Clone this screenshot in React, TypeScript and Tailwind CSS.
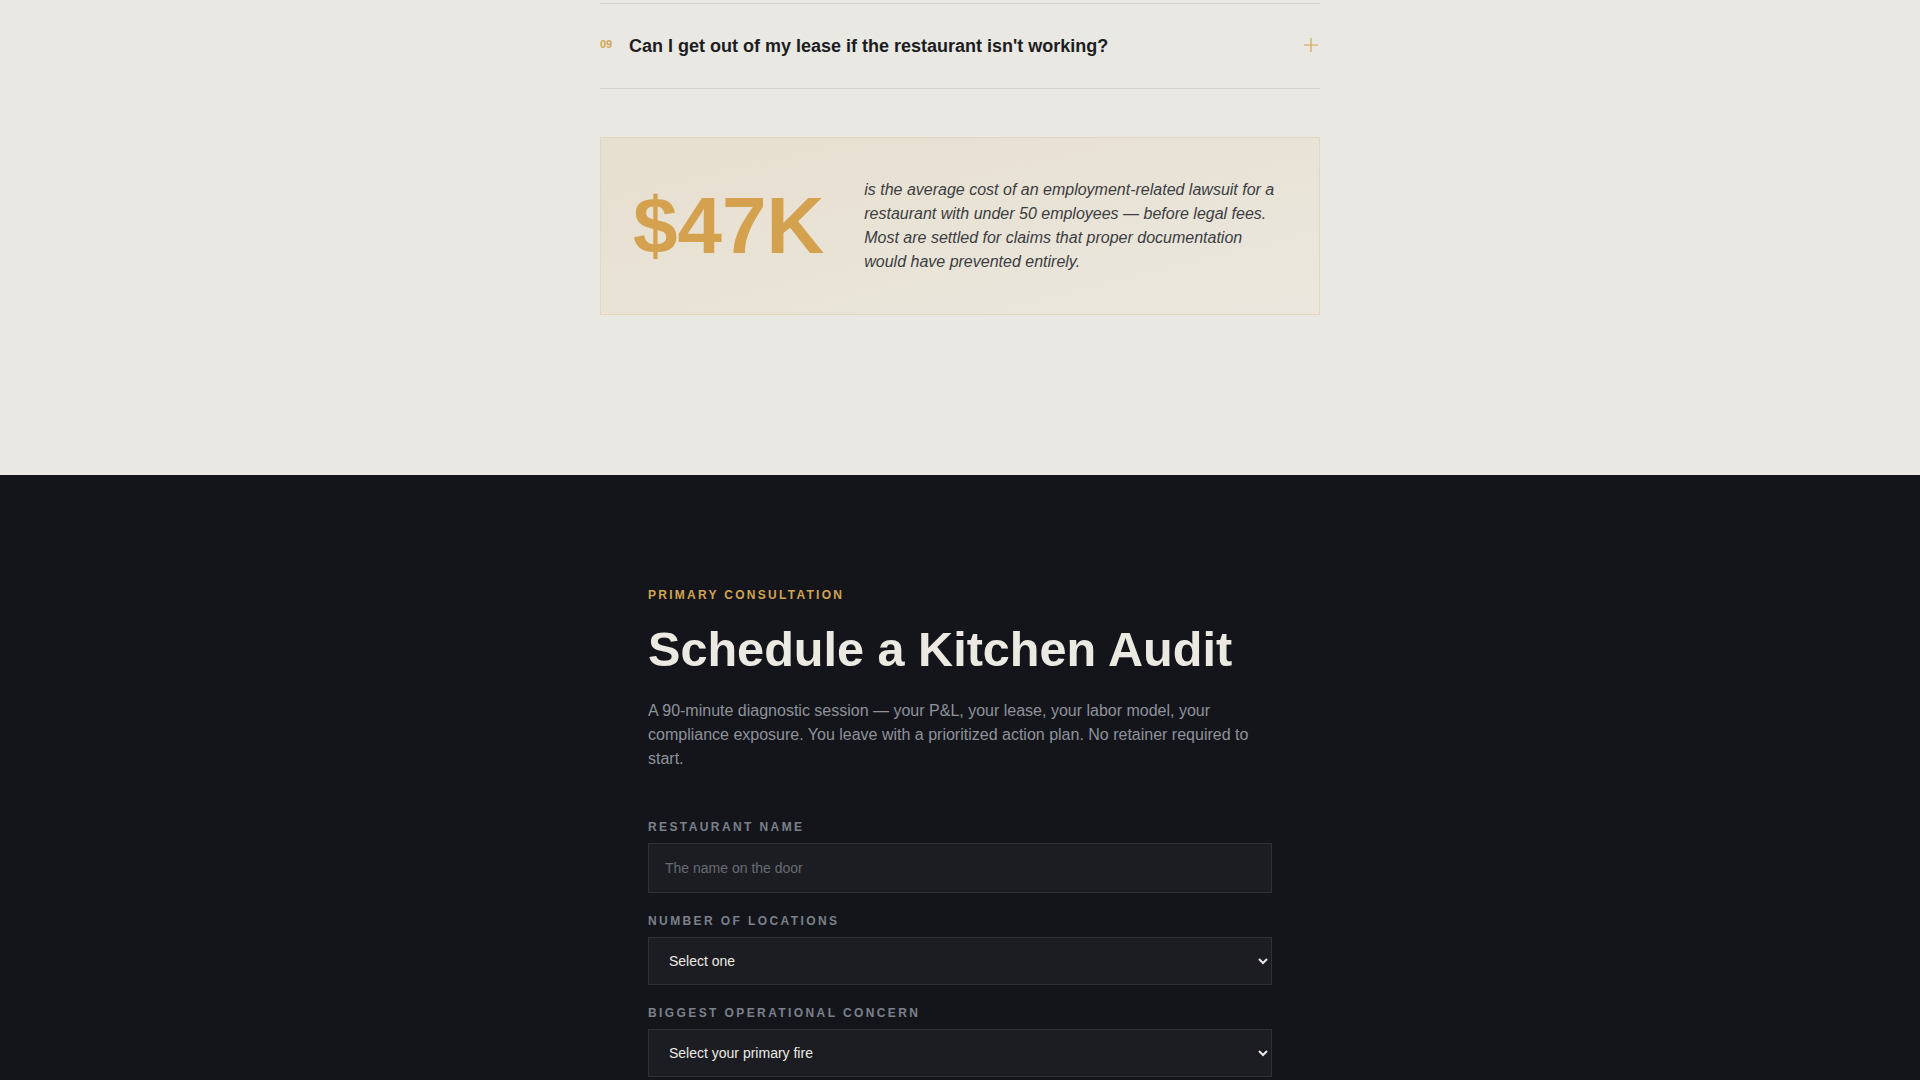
import React from "react";

const sans = { fontFamily: '"Liberation Sans", Arial, sans-serif' };

function FaqRow({ num, question }: { num: string; question: string }) {
  return (
    <div className="border-t border-b border-[#d6d3cb] py-[30px] flex items-start">
      <span className="w-[29px] shrink-0 mt-[2px] text-[11px] leading-4 font-bold text-[#d4a452]">{num}</span>
      <h3 className="flex-1 text-[18px] leading-6 font-bold text-[#1c1d22]">{question}</h3>
      <svg width="16" height="16" viewBox="0 0 16 16" className="mt-[3px] mr-[1px] shrink-0" fill="none">
        <path d="M8 1v14M1 8h14" stroke="#d4a452" strokeWidth="1.2" />
      </svg>
    </div>
  );
}

function Field({ label, children }: { label: string; children: React.ReactNode }) {
  return (
    <div className="flex flex-col">
      <label className="mb-2 text-[12px] leading-4 font-bold tracking-[0.2em] text-[#7b818c] uppercase">{label}</label>
      {children}
    </div>
  );
}

export default function App() {
  return (
    <div style={sans} className="min-h-screen bg-[#14151a]">
      <section className="bg-[#eae8e2] pt-[3px] pb-40">
        <div className="max-w-[720px] mx-auto">
          <FaqRow num="09" question="Can I get out of my lease if the restaurant isn't working?" />

          <div className="mt-12 border border-[#e2d6bd] bg-gradient-to-br from-[#e7dfcf] to-[#ebe7de] px-8 py-10 flex items-center gap-10">
            <div className="shrink-0 text-[80px] leading-none font-bold text-[#d4a24f]">$47K</div>
            <p className="max-w-[416px] text-[16px] leading-6 italic text-[#3b3d42]">
              is the average cost of an employment-related lawsuit for a restaurant with under 50 employees — before legal fees. Most are settled for claims that proper documentation would have prevented entirely.
            </p>
          </div>
        </div>
      </section>

      <section className="bg-[#14151a] pt-28 pb-24">
        <div className="max-w-[624px] mx-auto">
          <p className="text-[12px] leading-4 font-bold tracking-[0.19em] text-[#d1a452] uppercase mb-5">Primary Consultation</p>
          <h2 className="text-[48.6px] leading-[1.1] font-bold text-[#ece9e2] mb-[23px]">Schedule a Kitchen Audit</h2>
          <p className="text-[16px] leading-6 text-[#8e929b]">
            A 90-minute diagnostic session — your P&amp;L, your lease, your labor model, your compliance exposure. You leave with a prioritized action plan. No retainer required to start.
          </p>

          <form className="mt-12 flex flex-col gap-5">
            <Field label="Restaurant Name">
              <input
                type="text"
                placeholder="The name on the door"
                className="h-[50px] w-full bg-[#1c1d22] border border-[#2f3137] px-4 text-[14px] text-[#e8e6e1] placeholder:text-[#686b73] outline-none"
              />
            </Field>
            <Field label="Number of Locations">
              <select className="h-[48px] w-full bg-[#1c1d22] border border-[#2f3137] px-4 text-[14px] text-[#ece9e2] outline-none">
                <option>Select one</option>
                <option>1</option>
                <option>2–3</option>
                <option>4–10</option>
                <option>10+</option>
              </select>
            </Field>
            <Field label="Biggest Operational Concern">
              <select className="h-[48px] w-full bg-[#1c1d22] border border-[#2f3137] px-4 text-[14px] text-[#ece9e2] outline-none">
                <option>Select your primary fire</option>
                <option>Food cost</option>
                <option>Labor</option>
                <option>Lease</option>
                <option>Compliance</option>
              </select>
            </Field>
          </form>
        </div>
      </section>
    </div>
  );
}
